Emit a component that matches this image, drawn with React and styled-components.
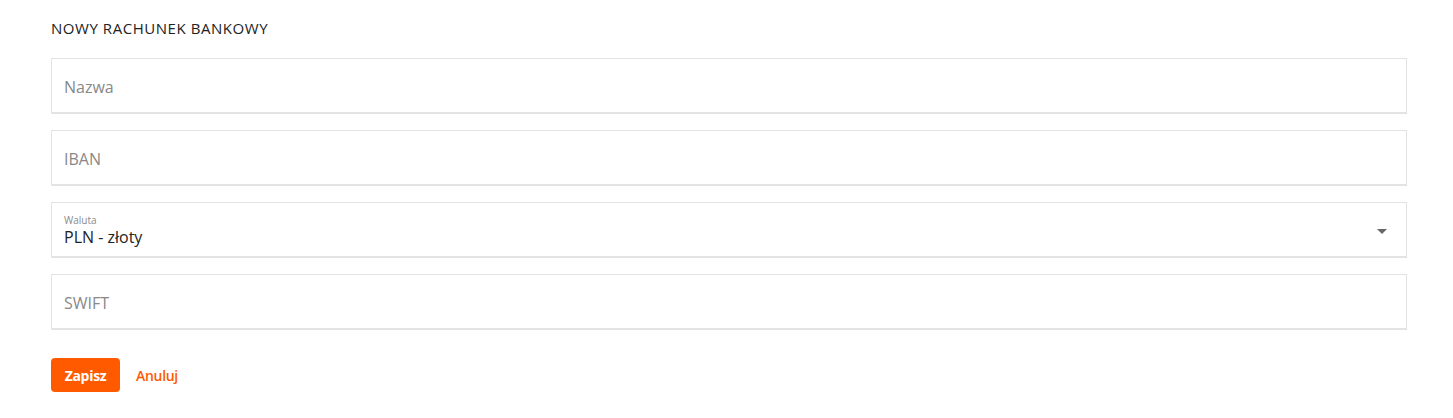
import React from 'react';
import styled, { createGlobalStyle } from 'styled-components';

const GlobalStyle = createGlobalStyle`
  body {
    margin: 0;
    background: #ffffff;
    font-family: "Open Sans", "Liberation Sans", sans-serif;
  }
`;

const Page = styled.div`
  padding: 17px 46px 0 51px;
`;

const Title = styled.h2`
  margin: 0 0 19px;
  font-size: 15px;
  line-height: 22px;
  font-weight: 400;
  color: #222222;
  letter-spacing: 0.55px;
`;

const Fields = styled.div`
  display: flex;
  flex-direction: column;
  gap: 16px;
`;

const Field = styled.div`
  position: relative;
  box-sizing: border-box;
  height: 56px;
  border: 1px solid #e3e3e3;
  border-bottom-width: 2px;
  display: flex;
  flex-direction: column;
  justify-content: center;
  padding: 2px 12px 0;
`;

const Placeholder = styled.span`
  font-size: 16px;
  color: #888888;
`;

const SmallLabel = styled.span`
  font-size: 10px;
  line-height: 12px;
  color: #8a8a8a;
  margin-top: 1px;
`;

const Value = styled.span`
  font-size: 16px;
  line-height: 22px;
  color: #222222;
`;

const Arrow = styled.span`
  position: absolute;
  right: 19px;
  top: 26px;
  width: 0;
  height: 0;
  border-left: 5px solid transparent;
  border-right: 5px solid transparent;
  border-top: 5px solid #666666;
`;

const Actions = styled.div`
  display: flex;
  align-items: center;
  gap: 16px;
  margin-top: 28px;
`;

const SaveButton = styled.button`
  height: 34px;
  width: 69px;
  border: none;
  border-radius: 4px;
  background: #ff5a00;
  color: #ffffff;
  font-family: "Open Sans", "Liberation Sans", sans-serif;
  font-size: 14px;
  font-weight: 700;
  letter-spacing: -0.3px;
  cursor: pointer;
`;

const CancelLink = styled.a`
  color: #ff5a00;
  font-size: 14px;
  font-weight: 600;
  letter-spacing: -0.3px;
  cursor: pointer;
`;

export default function App() {
  return (
    <>
      <GlobalStyle />
      <Page>
        <Title>NOWY RACHUNEK BANKOWY</Title>
        <Fields>
          <Field>
            <Placeholder>Nazwa</Placeholder>
          </Field>
          <Field>
            <Placeholder>IBAN</Placeholder>
          </Field>
          <Field>
            <SmallLabel>Waluta</SmallLabel>
            <Value>PLN - złoty</Value>
            <Arrow />
          </Field>
          <Field>
            <Placeholder>SWIFT</Placeholder>
          </Field>
        </Fields>
        <Actions>
          <SaveButton>Zapisz</SaveButton>
          <CancelLink>Anuluj</CancelLink>
        </Actions>
      </Page>
    </>
  );
}
